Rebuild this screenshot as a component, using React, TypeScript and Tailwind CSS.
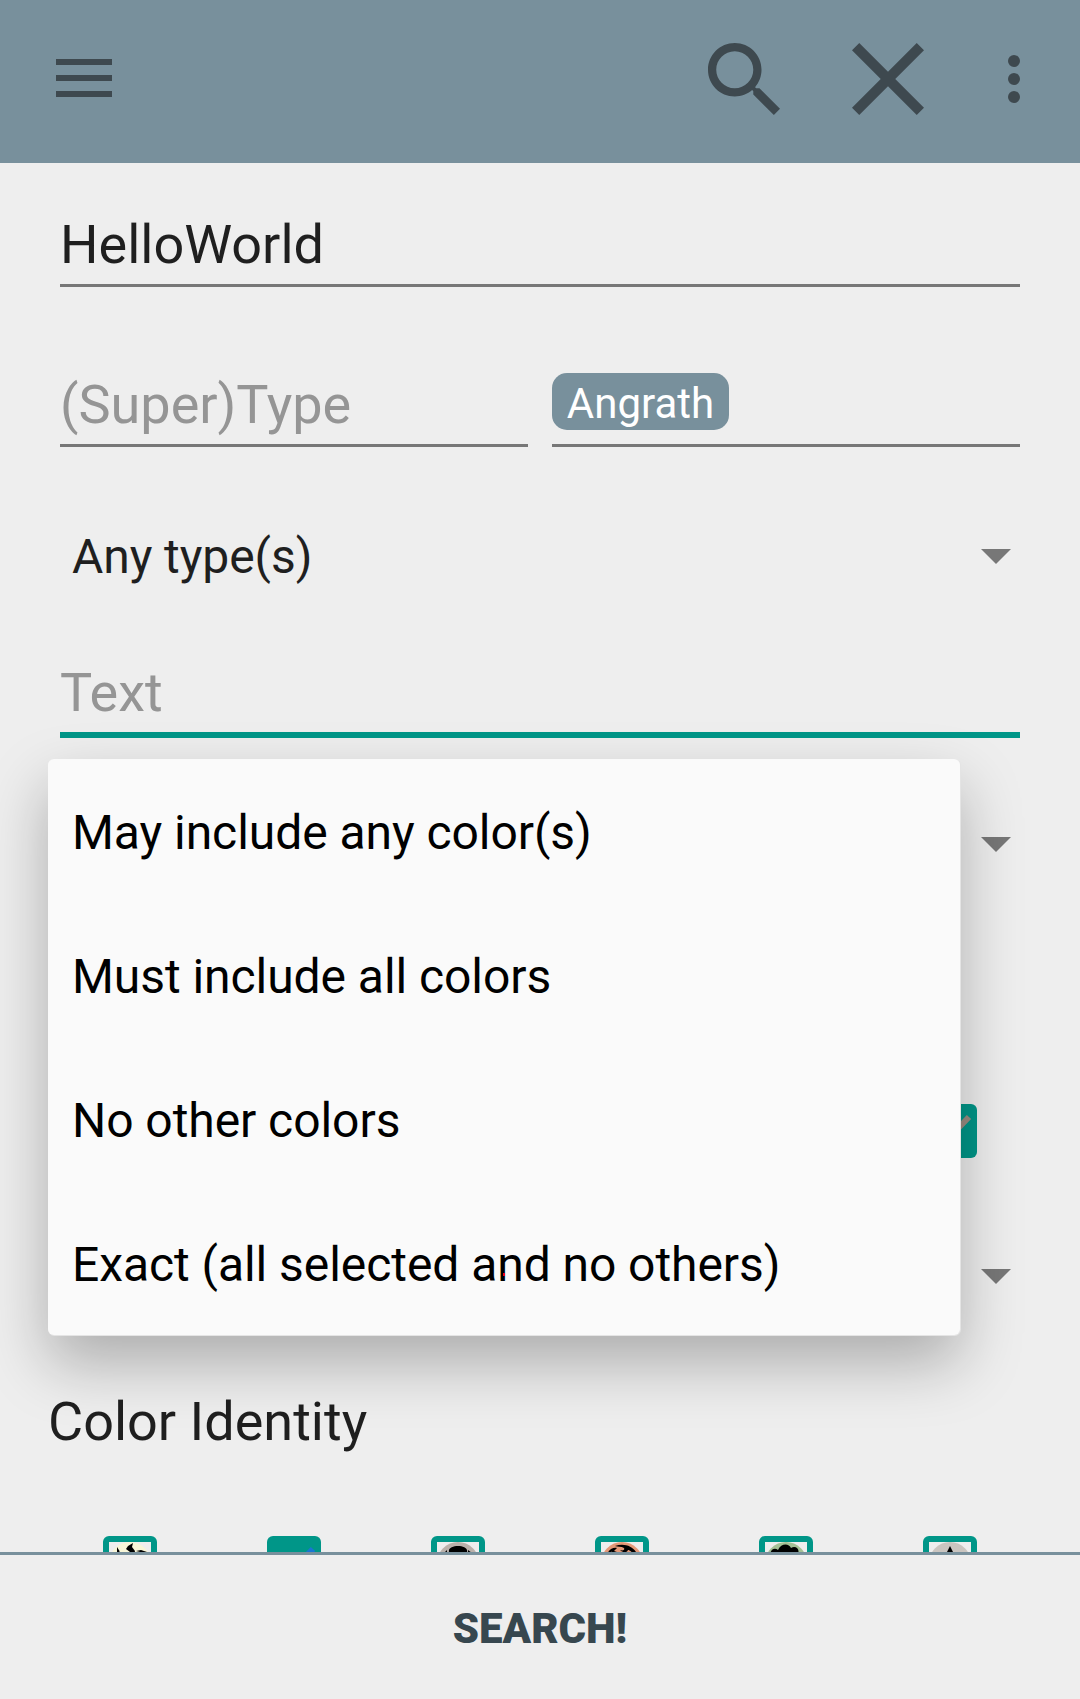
import React from "react";

function Caret() {
  return (
    <svg className="mb-0.5 h-[15px] w-[30px] shrink-0" viewBox="0 0 30 15">
      <path d="M0 0h30L15 15z" fill="#000" fillOpacity="0.5" />
    </svg>
  );
}

function Spinner({ label }: { label: string }) {
  return (
    <div className="flex h-14 items-center justify-between pr-[69px] pl-[72px]">
      <span className="text-[48px] leading-14 tracking-[-0.08px] text-[#1f1f1f]">{label}</span>
      <Caret />
    </div>
  );
}

function Field({ children, tone }: { children: React.ReactNode; tone: string }) {
  return (
    <div className={`flex-1 text-[54px] leading-[63px] pb-2 ${tone}`}>{children}</div>
  );
}

function Mana({ kind }: { kind: string }) {
  const disc: Record<string, string> = {
    W: "#f8f6d8",
    B: "#bab1ab",
    R: "#e49977",
    G: "#a3c095",
    C: "#cac5c0",
  };
  return (
    <svg className="h-[42px] w-[42px]" viewBox="0 0 42 42">
      <circle cx="21" cy="21" r="21" fill={disc[kind]} />
      {kind === "W" && (
        <path d="M8 5L10.500 9V12H8zM24 1L23 5L26 9L25 14H20L21 10L17 7L19 4zM27 9L32 8L38 10L35 14H29L31 10z" />
      )}
      {kind === "B" && (
        <path d="M12 10C10 2 32 2 30 10C30 12 26 14 21 14S12 12 12 10zM7 11l3-3v6H7zM35 11l-4-3v6h4z" />
      )}
      {kind === "R" && (
        <path d="M5 14C8 7 12 5 16 6L13 9L16 10L14 14H10L11 9L8 14zM14 4C23 1 31 4 35 10L37 10L38 14H33C31 9 28 8 27 8C26 11 22 11 19 8C22 9 24 8 23 6C20 4 17 5 14 4z" />
      )}
      {kind === "G" && (
        <path d="M5 14C5 8 9 5 13 8C16 1 24 1 26 6C31 3 35 8 33 11L34 14z" />
      )}
      {kind === "C" && <path d="M21 4L24 10L29 21L21 38L13 21L18 10z" />}
    </svg>
  );
}

function ManaBox({ kind, checked }: { kind: string; checked?: boolean }) {
  if (checked) {
    return (
      <div className="h-[54px] w-[54px] overflow-hidden rounded-[6px] bg-[#009688]">
        <svg className="h-[54px] w-[54px]" viewBox="0 0 54 54">
          <path
            d="M8 27L20 40L46 13"
            fill="none"
            stroke={kind === "U" ? "#1976d2" : "#9b8d82"}
            strokeWidth="6"
          />
        </svg>
      </div>
    );
  }
  return (
    <div className="h-[54px] w-[54px] rounded-[6px] border-6 border-[#009688]">
      <Mana kind={kind} />
    </div>
  );
}

function ManaRow({ checked }: { checked: string }) {
  return (
    <div className="mx-12 grid h-[54px] shrink-0 grid-cols-6 justify-items-center">
      {["W", "U", "B", "R", "G", "C"].map((k) => (
        <ManaBox key={k} kind={k} checked={k === checked} />
      ))}
    </div>
  );
}

const options = [
  "May include any color(s)",
  "Must include all colors",
  "No other colors",
  "Exact (all selected and no others)",
];

export default function App() {
  return (
    <div className="relative flex h-[1699px] w-[1080px] flex-col overflow-hidden bg-[#eee] font-['Roboto',sans-serif]">
      <header className="flex h-[163px] shrink-0 items-start justify-between bg-[#78909c] pr-[60px] pl-14 text-[#3e494f]">
        <div className="mt-[59px] flex w-14 flex-col gap-2.5">
          <div className="h-1.5 bg-[#3e494f]" />
          <div className="h-1.5 bg-[#3e494f]" />
          <div className="h-1.5 bg-[#3e494f]" />
        </div>
        <div className="flex items-start">
          <svg className="mt-[43px] mr-18 h-18 w-18" viewBox="3 3 17.49 17.49" fill="currentColor">
            <path d="M15.5 14h-.79l-.28-.27C15.41 12.590 16 11.110 16 9.500 16 5.910 13.090 3 9.500 3S3 5.910 3 9.500 5.910 16 9.500 16c1.610 0 3.090-.59 4.230-1.570l.27.28v.79l5 4.990L20.490 19l-4.990-5zm-6 0C7.010 14 5 11.990 5 9.500S7.010 5 9.500 5 14 7.010 14 9.500 11.990 14 9.500 14z" />
          </svg>
          <svg className="mt-[43px] mr-21 h-18 w-18" viewBox="5 5 14 14" fill="currentColor">
            <path d="M19 6.410L17.590 5 12 10.590 6.410 5 5 6.410 10.590 12 5 17.590 6.410 19 12 13.410 17.590 19 19 17.590 13.410 12z" />
          </svg>
          <div className="mt-[55px] flex flex-col gap-1.5">
            <div className="h-3 w-3 rounded-full bg-[#3e494f]" />
            <div className="h-3 w-3 rounded-full bg-[#3e494f]" />
            <div className="h-3 w-3 rounded-full bg-[#3e494f]" />
          </div>
        </div>
      </header>

      <main className="flex min-h-0 flex-1 flex-col overflow-hidden pt-[50px]">
        <div className="mx-[60px] flex border-b-3 border-[#777]">
          <Field tone="text-[#1f1f1f]">HelloWorld</Field>
        </div>

        <div className="mx-[60px] mt-[86px] flex h-[74px] gap-6">
          <div className="flex flex-1 border-b-3 border-[#777]">
            <Field tone="text-[#959595]">(Super)Type</Field>
          </div>
          <div className="flex flex-1 items-start border-b-3 border-[#777]">
            <span className="h-[57px] w-[177px] rounded-[15px] bg-[#78909c] pt-1.5 text-center text-[42px] leading-[49px] text-white">
              Angrath
            </span>
          </div>
        </div>

        <div className="mt-[82px]">
          <Spinner label="Any type(s)" />
        </div>

        <div className="mx-[60px] mt-[76px] flex border-b-6 border-[#009688]">
          <Field tone="text-[#959595]">Text</Field>
        </div>

        <div className="mt-[79px]">
          <Spinner label="" />
        </div>
        <div className="mt-[231px]">
          <ManaRow checked="C" />
        </div>
        <div className="mt-[91px]">
          <Spinner label="" />
        </div>

        <h2 className="mt-[85px] ml-12 text-[54px] leading-[63px] text-[#1f1f1f]">Color Identity</h2>
        <div className="mt-[83px]">
          <ManaRow checked="U" />
        </div>
      </main>

      <footer className="flex h-[147px] shrink-0 items-center justify-center border-t-3 border-[#78909c] bg-[#eee] pt-[3px] text-[42px] font-black text-[#37474f]">
        SEARCH!
      </footer>

      {/* Open dropdown, floating above the form */}
      <ul className="absolute top-[759px] left-12 w-[912px] rounded-[6px] bg-[#fafafa] shadow-[0.5px_0.5px_0_0.5px_#e4e4e4,0_28px_62px_rgba(0,0,0,0.28)]">
        {options.map((o) => (
          <li
            key={o}
            className="flex h-36 items-center pt-1 pl-6 text-[48px] leading-14 tracking-[-0.06px] text-black"
          >
            {o}
          </li>
        ))}
      </ul>
      <div className="absolute top-[1273px] left-[503px] h-[3px] w-[2px] bg-[#f0001c]" />
    </div>
  );
}
